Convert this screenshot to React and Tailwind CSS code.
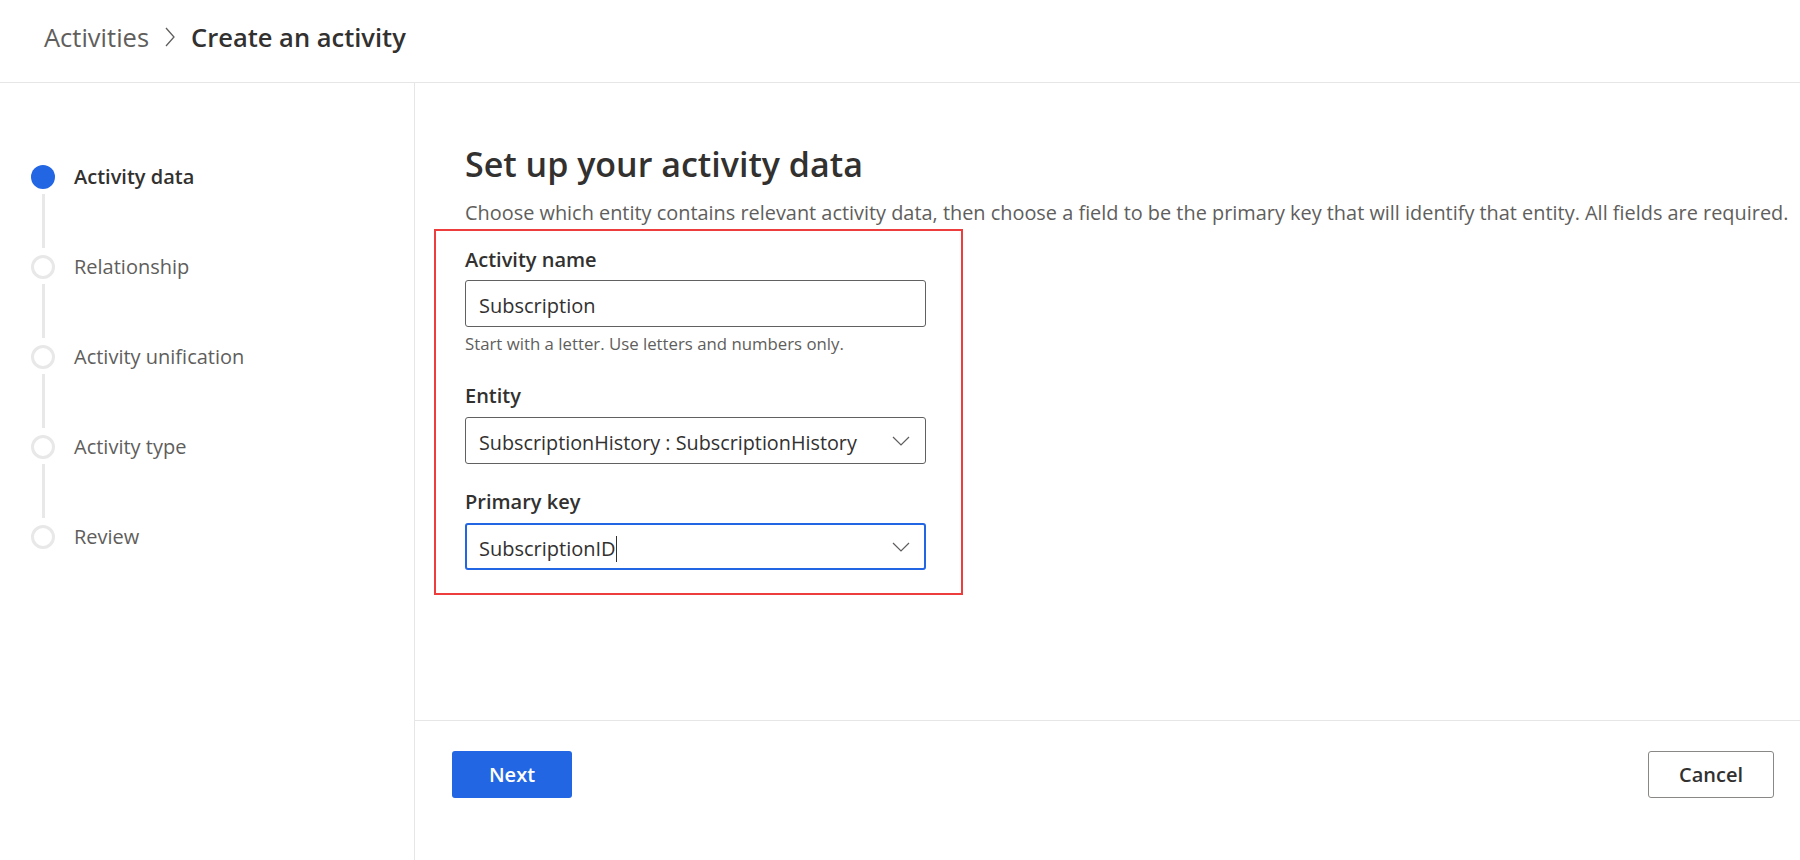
import { useState } from "react";

const steps = [
  { id: 1, name: "Activity data", active: true },
  { id: 2, name: "Relationship" },
  { id: 3, name: "Activity unification" },
  { id: 4, name: "Activity type" },
  { id: 5, name: "Review" },
];

const Chevron = () => (
  <svg width="18" height="10" viewBox="0 0 18 10" fill="none">
    <polyline points="1,1 9,9 17,1" stroke="#605e5c" strokeWidth="1.2" />
  </svg>
);

const App = () => {
  const [activityName, setActivityName] = useState("Subscription");

  return (
    <div className="h-[860px] w-full flex flex-col bg-white text-[#323130] font-['Segoe_UI','Open_Sans',sans-serif] overflow-hidden">
      {/* header / breadcrumb */}
      <div className="h-[83px] shrink-0 border-b border-[#e6e6e6] flex items-center pl-[44px] pb-[8px]">
        <span className="text-[25.5px] text-[#605e5c]">Activities</span>
        <svg className="mx-[16px]" width="10" height="20" viewBox="0 0 10 20" fill="none">
          <polyline points="1,1 9,10 1,19" stroke="#605e5c" strokeWidth="1.3" />
        </svg>
        <span className="text-[25.5px] font-semibold">Create an activity</span>
      </div>

      <div className="flex-1 flex min-h-0">
        {/* stepper */}
        <div className="w-[415px] shrink-0 border-r border-[#e6e6e6] pl-[31px] pt-[82px]">
          {steps.map((step, i) => (
            <div key={step.id}>
              <div className="flex items-center h-[24px]">
                {step.active ? (
                  <div className="w-[24px] h-[24px] rounded-full bg-[#2266e3]" />
                ) : (
                  <div className="w-[24px] h-[24px] rounded-full border-[3px] border-[#e8e8e8]" />
                )}
                <span
                  className={
                    step.active
                      ? "ml-[19px] text-[20px] font-semibold text-[#323130]"
                      : "ml-[19px] text-[20px] text-[#605e5c]"
                  }
                >
                  {step.name}
                </span>
              </div>
              {i < steps.length - 1 && (
                <div className="w-[24px] h-[66px] flex justify-center pt-[5px] pb-[7px]">
                  <div className="w-[3px] h-full bg-[#e8e8e8]" />
                </div>
              )}
            </div>
          ))}
        </div>

        {/* main */}
        <div className="flex-1 flex flex-col">
          <div className="flex-1 pl-[50px] pt-[61px]">
            <h1 className="text-[34px] leading-[40px] font-semibold">Set up your activity data</h1>
            <p className="mt-[17px] text-[19.9px] leading-[24px] text-[#605e5c] whitespace-nowrap">
              Choose which entity contains relevant activity data, then choose a field to be the primary key that will identify that entity. All fields are required.
            </p>

            <div className="mt-[4px] -ml-[31px] w-[529px] border-2 border-[#ee3d3d] pl-[29px] pt-[17px] pb-[23px]">
              <label className="block text-[20px] leading-[24px] font-semibold">Activity name</label>
              <input
                type="text"
                className="mt-[8px] block w-[461px] h-[47px] border border-[#616161] rounded-[3px] px-[13px] pt-[4px] text-[20px] text-[#323130] outline-none"
                value={activityName}
                onChange={(e) => setActivityName(e.target.value)}
              />
              <p className="mt-[7px] text-[16.8px] leading-[20px] text-[#605e5c]">
                Start with a letter. Use letters and numbers only.
              </p>

              <label className="block mt-[30px] text-[20px] leading-[24px] font-semibold">Entity</label>
              <div className="mt-[9px] w-[461px] h-[47px] border border-[#616161] rounded-[3px] pl-[13px] pr-[15px] flex items-center justify-between">
                <span className="pt-[4px] text-[19.8px] whitespace-nowrap">SubscriptionHistory : SubscriptionHistory</span>
                <Chevron />
              </div>

              <label className="block mt-[26px] text-[20px] leading-[24px] font-semibold">Primary key</label>
              <div className="mt-[9px] w-[461px] h-[47px] border-2 border-[#2266e3] rounded-[3px] pl-[12px] pr-[14px] flex items-center justify-between">
                <span className="pt-[4px] flex items-center text-[20px]">
                  SubscriptionID
                  <span className="inline-block w-[1px] h-[26px] bg-[#323130]" />
                </span>
                <Chevron />
              </div>
            </div>
          </div>

          {/* footer */}
          <div className="h-[140px] shrink-0 border-t border-[#e6e6e6] flex items-start justify-between pl-[37px] pr-[26px] pt-[30px]">
            <button className="w-[120px] h-[47px] rounded-[3px] bg-[#2266e3] text-white text-[20px] font-semibold">
              Next
            </button>
            <button className="w-[126px] h-[47px] rounded-[3px] border border-[#8a8886] bg-white text-[#323130] text-[20px] font-semibold">
              Cancel
            </button>
          </div>
        </div>
      </div>
    </div>
  );
};

export default App;
